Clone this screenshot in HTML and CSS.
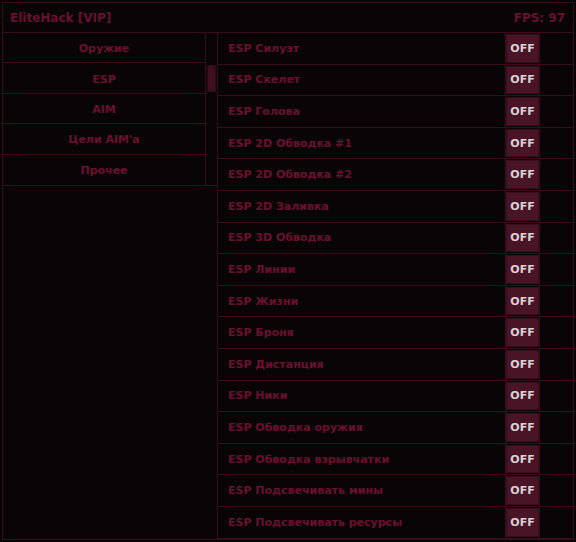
FILE: index.html
```html
<!DOCTYPE html>
<html lang="ru">
<head>
<meta charset="utf-8">
<title>EliteHack</title>
<link rel="stylesheet" href="styles.css">
</head>
<body>
<div class="frame">
  <div class="header">
    <span class="title">EliteHack [VIP]</span>
    <span class="fps">FPS: 97</span>
  </div>
  <div class="main">
    <div class="sidebar">
      <div class="menu">
        <ul class="tabs">
          <li>Оружие</li>
          <li>ESP</li>
          <li>AIM</li>
          <li>Цели AIM'a</li>
          <li>Прочее</li>
        </ul>
        <div class="scroll"><div class="thumb"></div></div>
      </div>
    </div>
    <div class="list">
      <div class="row"><span class="label">ESP Силуэт</span><span class="cell"><span class="btn">OFF</span></span><span class="tail"></span></div>
      <div class="row"><span class="label">ESP Скелет</span><span class="cell"><span class="btn">OFF</span></span><span class="tail"></span></div>
      <div class="row"><span class="label">ESP Голова</span><span class="cell"><span class="btn">OFF</span></span><span class="tail"></span></div>
      <div class="row"><span class="label">ESP 2D Обводка #1</span><span class="cell"><span class="btn">OFF</span></span><span class="tail"></span></div>
      <div class="row"><span class="label">ESP 2D Обводка #2</span><span class="cell"><span class="btn">OFF</span></span><span class="tail"></span></div>
      <div class="row"><span class="label">ESP 2D Заливка</span><span class="cell"><span class="btn">OFF</span></span><span class="tail"></span></div>
      <div class="row"><span class="label">ESP 3D Обводка</span><span class="cell"><span class="btn">OFF</span></span><span class="tail"></span></div>
      <div class="row"><span class="label">ESP Линии</span><span class="cell"><span class="btn">OFF</span></span><span class="tail"></span></div>
      <div class="row"><span class="label">ESP Жизни</span><span class="cell"><span class="btn">OFF</span></span><span class="tail"></span></div>
      <div class="row"><span class="label">ESP Броня</span><span class="cell"><span class="btn">OFF</span></span><span class="tail"></span></div>
      <div class="row"><span class="label">ESP Дистанция</span><span class="cell"><span class="btn">OFF</span></span><span class="tail"></span></div>
      <div class="row"><span class="label">ESP Ники</span><span class="cell"><span class="btn">OFF</span></span><span class="tail"></span></div>
      <div class="row"><span class="label">ESP Обводка оружия</span><span class="cell"><span class="btn">OFF</span></span><span class="tail"></span></div>
      <div class="row"><span class="label">ESP Обводка взрывчатки</span><span class="cell"><span class="btn">OFF</span></span><span class="tail"></span></div>
      <div class="row"><span class="label">ESP Подсвечивать мины</span><span class="cell"><span class="btn">OFF</span></span><span class="tail"></span></div>
      <div class="row"><span class="label">ESP Подсвечивать ресурсы</span><span class="cell"><span class="btn">OFF</span></span><span class="tail"></span></div>
    </div>
  </div>
</div>
</body>
</html>
```
FILE: styles.css
```css
html, body {
  margin: 0;
  padding: 0;
  background: #060304;
}
body {
  width: 576px;
  height: 542px;
  overflow: hidden;
  font-family: "DejaVu Sans", Verdana, sans-serif;
  font-weight: bold;
  font-size: 11px;
  color: #6c1030;
}
.frame {
  box-sizing: border-box;
  margin: 2px 0 0 2px;
  width: 572px;
  height: 538px;
  border: 1px solid #3a0d1d;
  background: #090406;
  display: flex;
  flex-direction: column;
}
.header {
  box-sizing: border-box;
  height: 30px;
  border-bottom: 1px solid #3a0d1d;
  display: flex;
  align-items: center;
  justify-content: space-between;
  padding: 1px 8px 0 7px;
  color: #6a1030;
}
.title {
  font-size: 12px;
}
.fps {
  font-size: 12px;
}
.main {
  flex: 1;
  display: flex;
  min-height: 0;
}
.sidebar {
  width: 214px;
  flex: none;
}
.menu {
  display: flex;
  border-bottom: 1px solid #3a0d1d;
}
.tabs {
  list-style: none;
  margin: 0;
  padding: 0;
  width: 202px;
  border-right: 1px solid #3a0d1d;
}
.tabs li {
  box-sizing: border-box;
  height: 30.4px;
  padding-top: 2px;
  display: flex;
  align-items: center;
  justify-content: center;
  border-bottom: 1px solid #3a0d1d;
}
.tabs li:last-child {
  border-bottom: none;
}
.scroll {
  flex: 1;
  padding: 32px 0 0 1px;
}
.thumb {
  width: 9px;
  height: 27px;
  background: #3e0f1f;
  box-shadow: inset 0 0 0 1px #2c0914;
}
.list {
  flex: 1;
  border-left: 1px solid #3a0d1d;
  display: flex;
  flex-direction: column;
}
.row {
  box-sizing: border-box;
  height: 31.6px;
  flex: none;
  display: flex;
  border-bottom: 1px solid #3a0d1d;
}
.label {
  flex: 1;
  display: flex;
  align-items: center;
  padding-left: 10px;
}
.cell {
  width: 33px;
  flex: none;
  border-left: 1px solid #3a0d1d;
  border-right: 1px solid #3a0d1d;
  padding: 1px 0;
  display: flex;
}
.btn {
  flex: 1;
  background: #4a1427;
  box-shadow: inset 0 0 0 1px #34101c;
  color: #d9d2d3;
  display: flex;
  align-items: center;
  justify-content: center;
  font-size: 11px;
}
.tail {
  width: 33px;
  flex: none;
}
```
